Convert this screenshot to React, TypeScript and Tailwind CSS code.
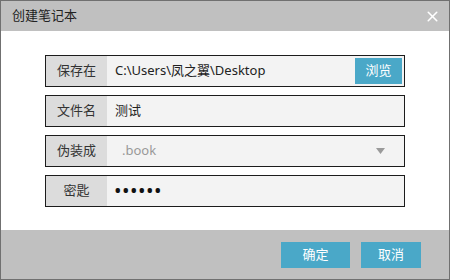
import { X } from "lucide-react";

const font = { fontFamily: '"Noto Sans", "Noto Sans CJK SC", sans-serif' };

function Row({ label, children }: { label: string; children: React.ReactNode }) {
  return (
    <div className="flex h-[32px] w-[360px] border border-[#1c1c1c] bg-[#f3f3f3]">
      <div className="flex w-[61px] shrink-0 items-center justify-center bg-[#dcdcdc] text-[13px] text-[#333]">
        {label}
      </div>
      <div className="flex flex-1 items-center">{children}</div>
    </div>
  );
}

export default function App() {
  return (
    <div
      className="flex h-[280px] w-[450px] flex-col border border-[#707070] bg-white"
      style={font}
    >
      {/* Title bar */}
      <div className="flex h-[30px] shrink-0 items-center justify-between bg-[#c0c0c0] pl-[11px] pr-[8px]">
        <span className="text-[13px] text-[#222]">创建笔记本</span>
        <X size={17} strokeWidth={2.2} className="text-white" />
      </div>

      {/* Body */}
      <div className="flex flex-1 flex-col gap-[8px] pl-[44px] pt-[24px]">
        <Row label="保存在">
          <span className="flex-1 pl-[8px] text-[13px] text-[#222]">C:\Users\凤之翼\Desktop</span>
          <button className="mr-[2px] h-[26px] w-[47px] bg-[#4aa8c8] text-[13px] text-white">
            浏览
          </button>
        </Row>
        <Row label="文件名">
          <span className="pl-[8px] text-[13px] text-[#222]">测试</span>
        </Row>
        <Row label="伪装成">
          <span className="flex-1 pl-[15px] text-[13px] text-[#999]">.book</span>
          <svg width="9" height="6" viewBox="0 0 9 6" className="mr-[19px]">
            <path d="M0 0 H9 L4.5 6 Z" fill="#9a9a9a" />
          </svg>
        </Row>
        <Row label="密匙">
          <span className="pl-[7px] text-[20px] leading-none tracking-[0.5px] text-[#111]">••••••</span>
        </Row>
      </div>

      {/* Footer */}
      <div className="flex h-[49px] shrink-0 items-start justify-end gap-[11px] bg-[#c0c0c0] pr-[28px] pt-[12px]">
        <button className="h-[26px] w-[69px] bg-[#4aa8c8] text-[13px] text-white">确定</button>
        <button className="h-[26px] w-[60px] bg-[#4aa8c8] text-[13px] text-white">取消</button>
      </div>
    </div>
  );
}
